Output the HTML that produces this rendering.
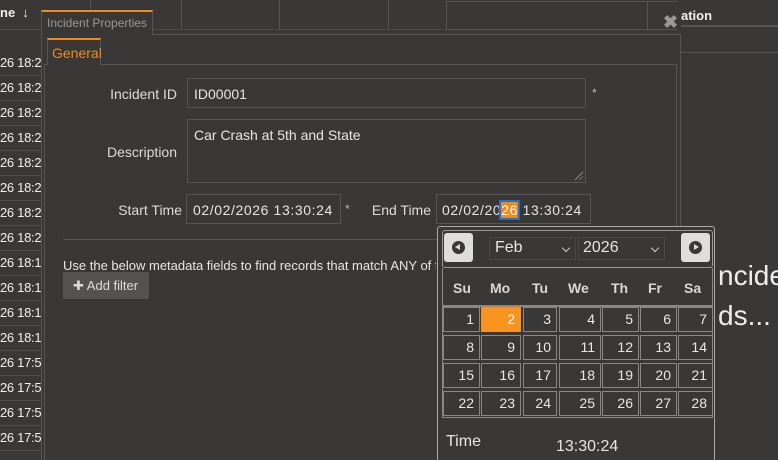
<!DOCTYPE html>
<html style="overflow:hidden;height:460px"><head><style>
*{box-sizing:border-box;margin:0;padding:0}
body{width:778px;height:460px;overflow:hidden;background:#3a3836;font-family:"Liberation Sans",sans-serif;color:#e6e6e6;font-size:14px;position:relative}
.a{position:absolute}
.row{position:absolute;left:0;width:41px;height:25px;border-bottom:1px solid #4e4c4a;font-size:13px;color:#f0f0f0;white-space:nowrap;overflow:hidden;line-height:24px;letter-spacing:-.3px}
.bx{position:absolute;border:1px solid #575553}
.lbl{position:absolute;color:#dcdcdc;font-size:14px;text-align:right}
.cell{position:absolute;border:1px solid #8a8886;text-align:right;padding-right:5px;font-size:14px;line-height:22px;color:#e8e8e8}
.wd{position:absolute;top:280px;font-size:14px;font-weight:bold;color:#d8d8d8}
.chev{position:absolute;right:6px;top:7px;width:6px;height:6px;border-right:1px solid #ccc;border-bottom:1px solid #ccc;transform:rotate(45deg)}
</style></head><body>
<div class="a" style="left:0;top:0;width:778px;height:30px;border-bottom:1px solid #4e4c4a"></div>
<div class="a" style="left:0;top:5px;font-size:13px;font-weight:bold;color:#f0f0f0">ne&nbsp; ↓</div>
<div class="a" style="left:90px;top:0;width:1px;height:30px;background:#555"></div>
<div class="a" style="left:181px;top:0;width:1px;height:30px;background:#555"></div>
<div class="a" style="left:279px;top:0;width:1px;height:30px;background:#555"></div>
<div class="a" style="left:388px;top:0;width:1px;height:30px;background:#555"></div>
<div class="a" style="left:446px;top:1px;width:332px;height:29px;border:1px solid #555"></div>
<div class="a" style="left:647px;top:1px;width:1px;height:29px;background:#555"></div>
<div class="a" style="left:678px;top:0;width:100px;height:52px;background:#3a3836"></div>
<div class="a" style="left:681px;top:8px;font-size:13px;font-weight:bold;color:#f0f0f0">ation</div>
<div class="a" style="left:681px;top:25px;width:97px;height:2px;background:#555"></div>
<div class="a" style="left:681px;top:52px;width:97px;height:1px;background:#555"></div>
<div class="a" style="left:718px;top:256px;font-size:28px;color:#eee;line-height:40px">ncide<br>ds...</div>
<div class="row" style="top:51px">26 18:23</div>
<div class="row" style="top:76px">26 18:23</div>
<div class="row" style="top:101px">26 18:21</div>
<div class="row" style="top:126px">26 18:21</div>
<div class="row" style="top:151px">26 18:20</div>
<div class="row" style="top:176px">26 18:20</div>
<div class="row" style="top:201px">26 18:20</div>
<div class="row" style="top:226px">26 18:20</div>
<div class="row" style="top:251px">26 18:19</div>
<div class="row" style="top:276px">26 18:17</div>
<div class="row" style="top:301px">26 18:17</div>
<div class="row" style="top:326px">26 18:17</div>
<div class="row" style="top:351px">26 17:59</div>
<div class="row" style="top:376px">26 17:59</div>
<div class="row" style="top:401px">26 17:59</div>
<div class="row" style="top:426px">26 17:59</div>
<div class="a" style="left:41px;top:34px;width:640px;height:426px;background:#3a3836;border:1px solid #555;border-bottom:none"></div>
<div class="a" style="left:41px;top:10px;width:112px;height:25px;background:#3a3836;border:1px solid #555;border-top:2px solid #f08a1c;border-bottom:none;color:#9a9896;font-size:12px;padding:4px 0 0 5px;white-space:nowrap">Incident Properties</div>
<div class="a" style="left:663px;top:12px;font-size:18px;color:#9a9896;font-weight:bold">✖</div>
<div class="a" style="left:44px;top:64px;width:633px;height:396px;border:1px solid #555;border-bottom:none"></div>
<div class="a" style="left:47px;top:38px;width:54px;height:27px;background:#3a3836;border:1px solid #555;border-top:2px solid #f08a1c;border-bottom:none;color:#f08a1c;font-size:14px;padding:5px 0 0 4px">General</div>
<div class="lbl" style="left:90px;width:87px;top:86px">Incident ID</div>
<div class="bx" style="left:187px;top:78px;width:399px;height:30px;padding:7px 6px">ID00001</div>
<div class="a" style="left:592px;top:86px;font-size:12px;color:#bbb">*</div>
<div class="lbl" style="left:90px;width:87px;top:144px">Description</div>
<div class="bx" style="left:187px;top:119px;width:399px;height:64px;padding:7px 6px">Car Crash at 5th and State</div>
<div class="a" style="left:573px;top:170px;width:10px;height:10px;background:repeating-linear-gradient(135deg,transparent 0 2px,#888 2px 3px);clip-path:polygon(100% 0,100% 100%,0 100%)"></div>
<div class="lbl" style="left:100px;width:82px;top:202px">Start Time</div>
<div class="bx" style="left:186px;top:194px;width:155px;height:30px;padding:7px 6px;letter-spacing:.6px;white-space:nowrap">02/02/2026 13:30:24</div>
<div class="a" style="left:345px;top:202px;font-size:12px;color:#bbb">*</div>
<div class="lbl" style="left:350px;width:81px;top:202px">End Time</div>
<div class="bx" style="left:436px;top:194px;width:155px;height:30px;padding:7px 5px;letter-spacing:.6px;white-space:nowrap">02/02/20<span style="background:#f08a1c;outline:2px solid #1e6fd0;color:#fff">26</span> 13:30:24</div>
<div class="a" style="left:63px;top:239px;width:375px;height:1px;background:#555"></div>
<div class="a" style="left:63px;top:258px;font-size:13px;white-space:nowrap;width:373px;overflow:hidden">Use the below metadata fields to find records that match ANY of the</div>
<div class="a" style="left:63px;top:272px;width:86px;height:27px;background:#555351;color:#ddd;font-size:13px;padding:6px 0 0 10px">✚ Add filter</div>
<div class="a" style="left:437px;top:226px;width:278px;height:234px;background:#3a3836;border:1px solid #aaa;border-bottom:none;border-radius:3px 3px 0 0"></div>
<div class="a" style="left:442px;top:230px;width:271px;height:38px;border:1px solid #999;border-radius:3px"></div>
<div class="a" style="left:444px;top:233px;width:29px;height:29px;background:#ddd;border-radius:3px"><div style="margin:8px;width:13px;height:13px;border-radius:50%;background:#3a3836;position:relative"><div style="position:absolute;left:3px;top:3px;border-right:5px solid #ddd;border-top:3.5px solid transparent;border-bottom:3.5px solid transparent"></div></div></div>
<div class="a" style="left:681px;top:233px;width:29px;height:29px;background:#ddd;border-radius:3px"><div style="margin:8px;width:13px;height:13px;border-radius:50%;background:#3a3836;position:relative"><div style="position:absolute;left:5px;top:3px;border-left:5px solid #ddd;border-top:3.5px solid transparent;border-bottom:3.5px solid transparent"></div></div></div>
<div class="a" style="left:489px;top:237px;width:87px;height:23px;border:1px solid #4a4846;font-size:16px;padding:1px 0 0 5px">Feb<span class="chev"></span></div>
<div class="a" style="left:578px;top:237px;width:87px;height:23px;border:1px solid #4a4846;font-size:16px;padding:1px 0 0 4px">2026<span class="chev"></span></div>
<div class="a" style="left:442px;top:268px;width:271px;height:39px;border:1px solid #888;border-top:none"></div>
<div class="wd" style="left:453px">Su</div><div class="wd" style="left:490px">Mo</div><div class="wd" style="left:532px">Tu</div><div class="wd" style="left:568px">We</div><div class="wd" style="left:611px">Th</div><div class="wd" style="left:648px">Fr</div><div class="wd" style="left:684px">Sa</div>
<div class="a" style="left:442px;top:305px;width:271px;height:113px;border:1px solid #888"></div>
<div class="cell" style="left:443px;top:307px;width:37px;height:25px">1</div>
<div class="cell" style="left:481px;top:307px;width:40px;height:25px;background:#f7931e;border-color:#f7931e;color:#fff">2</div>
<div class="cell" style="left:523px;top:307px;width:34px;height:25px">3</div>
<div class="cell" style="left:559px;top:307px;width:42px;height:25px">4</div>
<div class="cell" style="left:602px;top:307px;width:37px;height:25px">5</div>
<div class="cell" style="left:640px;top:307px;width:37px;height:25px">6</div>
<div class="cell" style="left:678px;top:307px;width:35px;height:25px">7</div>
<div class="cell" style="left:443px;top:335px;width:37px;height:25px">8</div>
<div class="cell" style="left:481px;top:335px;width:40px;height:25px">9</div>
<div class="cell" style="left:523px;top:335px;width:34px;height:25px">10</div>
<div class="cell" style="left:559px;top:335px;width:42px;height:25px">11</div>
<div class="cell" style="left:602px;top:335px;width:37px;height:25px">12</div>
<div class="cell" style="left:640px;top:335px;width:37px;height:25px">13</div>
<div class="cell" style="left:678px;top:335px;width:35px;height:25px">14</div>
<div class="cell" style="left:443px;top:363px;width:37px;height:25px">15</div>
<div class="cell" style="left:481px;top:363px;width:40px;height:25px">16</div>
<div class="cell" style="left:523px;top:363px;width:34px;height:25px">17</div>
<div class="cell" style="left:559px;top:363px;width:42px;height:25px">18</div>
<div class="cell" style="left:602px;top:363px;width:37px;height:25px">19</div>
<div class="cell" style="left:640px;top:363px;width:37px;height:25px">20</div>
<div class="cell" style="left:678px;top:363px;width:35px;height:25px">21</div>
<div class="cell" style="left:443px;top:391px;width:37px;height:25px">22</div>
<div class="cell" style="left:481px;top:391px;width:40px;height:25px">23</div>
<div class="cell" style="left:523px;top:391px;width:34px;height:25px">24</div>
<div class="cell" style="left:559px;top:391px;width:42px;height:25px">25</div>
<div class="cell" style="left:602px;top:391px;width:37px;height:25px">26</div>
<div class="cell" style="left:640px;top:391px;width:37px;height:25px">27</div>
<div class="cell" style="left:678px;top:391px;width:35px;height:25px">28</div>
<div class="a" style="left:446px;top:433px;font-size:16px">Time</div>
<div class="a" style="left:556px;top:438px;font-size:16px">13:30:24</div>
</body></html>
